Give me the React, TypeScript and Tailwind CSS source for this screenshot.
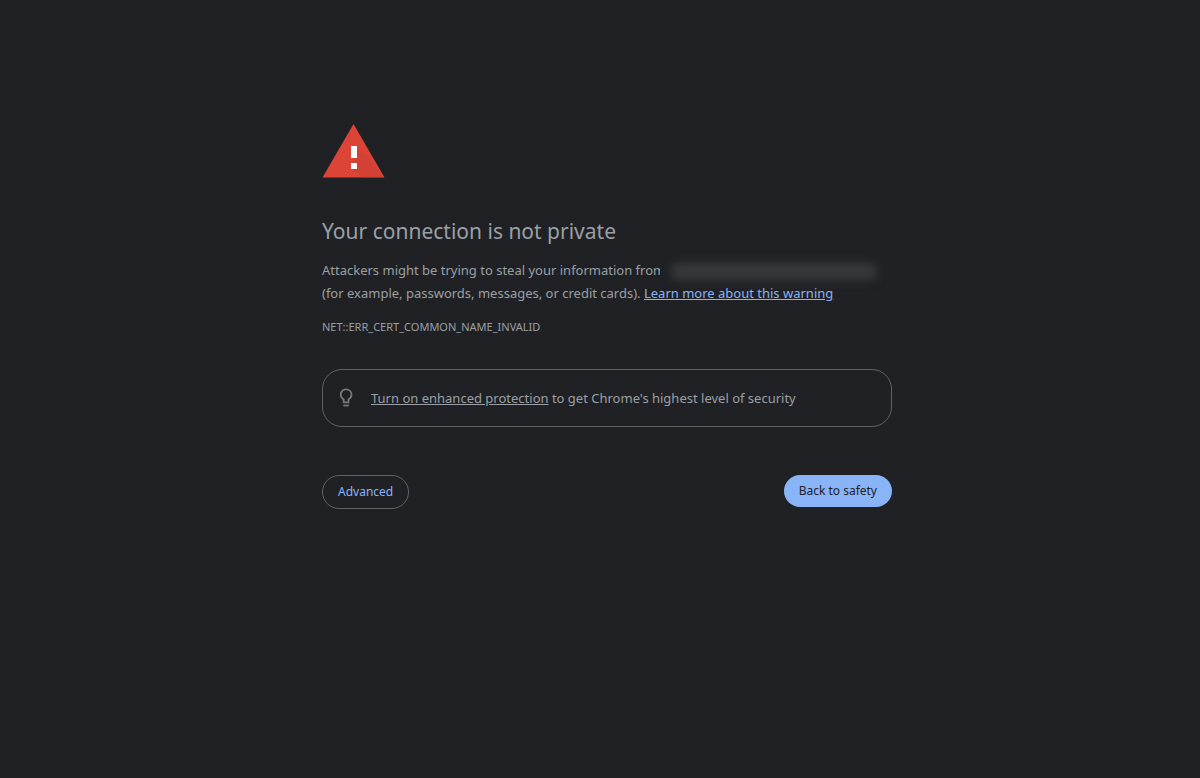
import { MouseEvent, useState } from "react";

const WarningIcon = () => (
  <svg
    width="64"
    height="56"
    viewBox="0 0 64 56"
    className="block"
    aria-hidden="true"
  >
    <path d="M31.500 1 62.500 54.500H.5z" fill="#db4437" />
    <path d="M35 23 49 37 62.500 54.500H42l-13-9z" fill="#c63d32" opacity=".35" />
    <path d="M29 23h6v12h-6zM29 40h6v6h-6z" fill="#fff" />
  </svg>
);

const BulbIcon = () => (
  <svg
    width="24"
    height="24"
    viewBox="0 0 24 24"
    className="shrink-0"
    fill="none"
    stroke="#767a7f"
    aria-hidden="true"
  >
    <path
      d="M8.700 16.300v-2.700C6.900 12.500 5.700 10.800 5.700 8.600c0-3.100 2.300-5.300 5.400-5.300s5.400 2.200 5.400 5.300c0 2.200-1.200 3.900-3 5v2.700z"
      strokeWidth="1.800"
    />
    <path d="M8.400 19.500h5.400" strokeWidth="1.800" />
  </svg>
);

export default function App() {
  const [expanded, setExpanded] = useState(false);

  const stay = (e: MouseEvent) => e.preventDefault();

  return (
    <div className="min-h-screen bg-[#202124] px-6 font-['Noto_Sans',sans-serif] text-[13px] text-[#9aa0a6]">
      <main className="mx-auto w-full max-w-[584px] pt-[123px] pl-[14px]">
        <WarningIcon />

        <h1 className="mt-9 text-[21px] leading-8">
          Your connection is not private
        </h1>

        <p className="mt-3 leading-[23px]">
          Attackers might be trying to steal your information from
          {/* The host name is redacted */}
          <span className="relative -ml-[5px] inline-block h-[23px] w-[220px] bg-[#202124] align-top">
            <span className="absolute top-1 right-1 bottom-0.5 left-3 block rounded bg-[#38393c] blur-[5px]" />
          </span>{" "}
          (for example, passwords, messages, or credit cards).{" "}
          <a href="#learn-more" onClick={stay} className="text-[#8ab4f8] underline">
            Learn more about this warning
          </a>
        </p>

        <p className="mt-3 text-[11px] leading-5">NET::ERR_CERT_COMMON_NAME_INVALID</p>

        <div className="mt-8 flex items-center gap-3 rounded-[20px] border border-[#5f6368] px-3 py-4">
          <BulbIcon />
          <p className="leading-6">
            <a href="#enhanced-protection" onClick={stay} className="underline">
              Turn on enhanced protection
            </a>{" "}
            to get Chrome's highest level of security
          </p>
        </div>

        <div className="mt-12 flex items-start justify-between">
          <button
            type="button"
            aria-expanded={expanded}
            onClick={() => setExpanded(!expanded)}
            className="rounded-full border border-[#5f6368] px-[15px] py-1.5 text-xs leading-5 text-[#8ab4f8]"
          >
            Advanced
          </button>
          <button
            type="button"
            className="rounded-full bg-[#8ab4f8] px-[15px] py-1.5 text-xs leading-5 text-[#202124]"
          >
            Back to safety
          </button>
        </div>
      </main>
    </div>
  );
}
